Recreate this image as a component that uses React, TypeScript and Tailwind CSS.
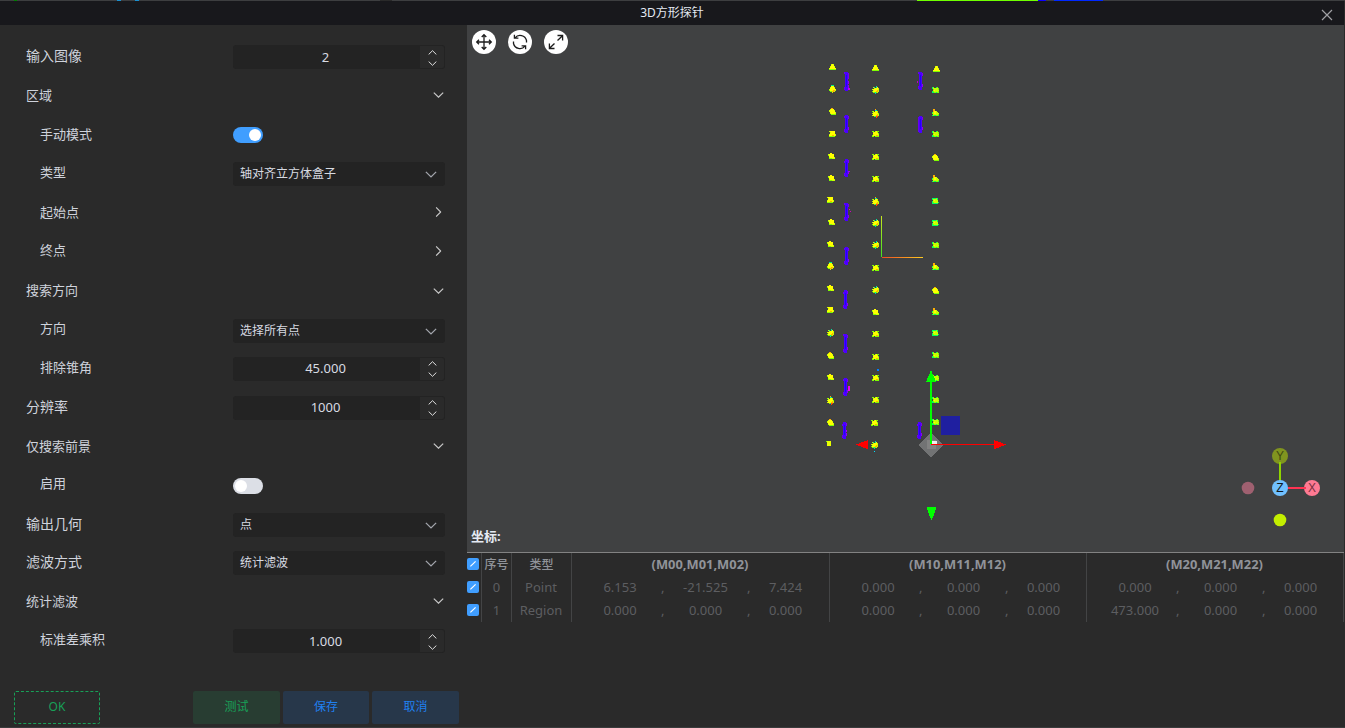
import React from "react";

type RowProps = { label: string; h?: string; size?: string; indent?: boolean; lift?: string; children?: React.ReactNode };

const base = "font-['Noto_Sans','Noto_Sans_CJK_SC',sans-serif]";

function Row({ label, h = "h-[39px]", size = "text-[13px]", indent = false, lift = "pb-0", children }: RowProps) {
  return (
    <div className={`flex shrink-0 items-start ${h}`}>
      <div className={`flex h-[38px] w-[233px] shrink-0 items-center leading-none text-[#cfd3dc] ${indent ? "pl-10" : "pl-[26px]"} ${size} ${lift}`}>
        {label}
      </div>
      <div className="flex h-[38px] w-[212px] items-center">{children}</div>
    </div>
  );
}

function Chevron({ className = "h-[6px] w-[11px] text-[#c8c8c8]" }: { className?: string }) {
  return (
    <svg viewBox="0 0 11 6" fill="none" stroke="currentColor" strokeWidth="1.2" className={className}>
      <path d="M0.8 0.6 5.5 5.2 10.2 0.6" />
    </svg>
  );
}

function Fold({ open = true }: { open?: boolean }) {
  return (
    <div className="flex w-full items-center justify-end pr-px pb-[2px]">
      {open ? <Chevron className="h-[6px] w-[11px] text-[#c8c8c8]" /> : <Chevron className="h-[6px] w-[11px] -rotate-90 text-[#c8c8c8]" />}
    </div>
  );
}

function NumberBox({ value, raised = false }: { value: string; raised?: boolean }) {
  return (
    <div className="flex h-6 w-[212px] items-center rounded-[3px] bg-[#232323] p-px">
      <div className={`w-[186px] pr-[3px] text-center text-[13px] leading-none text-[#d8dbe2] ${raised ? "pb-[2px]" : ""}`}>{value}</div>
      <div className={`flex h-[22px] w-6 flex-col items-center justify-center gap-[6px] rounded-r-[2px] bg-[#2a2a2a] ${raised ? "pb-px" : "pt-px"}`}>
        <Chevron className="h-[5px] w-[9px] rotate-180 text-[#e4e4e4]" />
        <Chevron className="h-[5px] w-[9px] text-[#e4e4e4]" />
      </div>
    </div>
  );
}

function SelectBox({ value }: { value: string }) {
  return (
    <div className="flex h-6 w-[212px] items-center justify-between rounded-[3px] bg-[#232323] pr-2 pl-[7px]">
      <span className="text-[12px] leading-none text-[#d8dbe2]">{value}</span>
      <Chevron className="h-[7px] w-[12px] text-[#a3a6ad]" />
    </div>
  );
}

function Toggle({ on = false }: { on?: boolean }) {
  return (
    <div className={`flex h-4 w-[30px] items-center rounded-full px-[2px] ${on ? "justify-end bg-[#409eff]" : "justify-start bg-[#dcdfe6]"}`}>
      <div className="size-3 rounded-full bg-white" />
    </div>
  );
}

const palette: Record<string, string> = {
  y: "#ffff00",
  l: "#c8ff00",
  g: "#80ff00",
  t: "#00ff60",
  c: "#00e6a0",
  o: "#ffb000",
  r: "#ff5000",
};

const sprites: Record<string, string[]> = {
  A: ["..lyl..", "..yyy..", ".lyyyl.", ".yyyyy.", "yyyyyyy", "ggggggg"],
  B: ["..ctc..", "..yyy..", ".lyyyl.", ".yyyyy.", "lyyyyyy", "gyyyool", ".ggool.", "...l..."],
  C: ["..oo...", ".lyyy..", "lyyyyl.", "lyyyyy.", ".yyyyyl", ".lyyyyl", "..ggggg"],
  D: ["lyyyyy.", ".lyyyy.", ".yyyyy.", "lyyyyyl", "yyyooyl", "gggggg."],
  E: ["..yy...", "lyyyyy.", "gyyyyy.", ".yyyyy.", ".lyyyyl", ".ggglll"],
  F: ["....c..", ".lc.cy.", "..lyyyl", "lyyyyyl", ".lyyyol", "gyyyool", ".ggcgl.", "...c..."],
  G: ["gg.lygg", ".lyyyl.", ".yyyyyg", ".lyyyyl", "gyyyool", "gg.gggg"],
  K: ["tg..tg.", "tlllllg", ".gllllg", ".lyllll", "tgllllg", "ttggtgg"],
  L: [".oo....", ".oo....", ".oyyl..", "tlyyll.", "glyylll", ".lllllg", "tgttggt"],
  M: ["ttttgt.", "tllllt.", ".lylll.", "tlllll.", "tgllllt", "tttttt."],
  N: ["...o...", "...cc..", "gl.yyl.", ".lyyyl.", "lyyyyyg", ".yyyyol", "lyyyool", "..gcrr.", "....r.."],
};

const points: [number, number, string][] = [
  [832, 67, "A"], [832, 89, "B"], [832, 111, "C"], [832, 134, "D"], [831, 156, "E"], [831, 178, "E"],
  [830, 200, "D"], [831, 222, "E"], [830, 244, "E"], [830, 266, "B"], [830, 288, "E"], [830, 310, "D"],
  [830, 333, "F"], [830, 355, "C"], [830, 377, "E"], [830, 400, "N"], [830, 422, "C"],
  [875, 68, "A"], [875, 90, "F"], [875, 113, "N"], [875, 134, "G"], [875, 157, "G"], [875, 179, "G"],
  [875, 201, "N"], [875, 223, "F"], [875, 245, "F"], [875, 268, "G"], [875, 290, "F"], [875, 312, "E"],
  [875, 334, "G"], [875, 357, "G"], [875, 378, "G"], [875, 400, "G"], [874, 423, "G"], [874, 445, "F"],
  [936, 69, "A"], [935, 90, "K"], [935, 112, "L"], [935, 134, "K"], [935, 157, "C"], [935, 178, "L"],
  [935, 201, "M"], [935, 223, "M"], [935, 245, "K"], [935, 266, "L"], [935, 290, "C"], [935, 311, "L"],
  [935, 333, "M"], [935, 355, "K"], [935, 378, "K"], [935, 400, "K"], [935, 422, "K"],
];

const bars: [number, number, number][] = [
  [845, 72, 19], [845, 115, 18], [845, 159, 18], [845, 203, 18], [845, 247, 18], [844, 290, 19],
  [844, 334, 19], [844, 378, 18], [843, 422, 17], [919, 72, 18], [919, 116, 17], [918, 422, 17],
];

function Scene() {
  return (
    <svg width="877" height="527" viewBox="467 25 877 527" className="block">
      <defs>
        <linearGradient id="axisX" x1="882" x2="923" y1="0" y2="0" gradientUnits="userSpaceOnUse">
          <stop offset="0" stopColor="#f04a20" />
          <stop offset="1" stopColor="#ffcc22" />
        </linearGradient>
        <linearGradient id="axisY" x1="0" x2="0" y1="257" y2="216" gradientUnits="userSpaceOnUse">
          <stop offset="0" stopColor="#40e020" />
          <stop offset="1" stopColor="#c8e620" />
        </linearGradient>
      </defs>
      <g shapeRendering="crispEdges">
        {bars.map(([x, y, h], i) => (
          <g key={i}>
            <rect x={x} y={y} width="3" height={h} fill="#4a00ff" />
            <rect x={x + 1} y={y + 3} width="1" height={h - 7} fill="#2000ff" />
            <rect x={x - 1} y={y + (i % 3)} width="1" height="2" fill="#6800f0" />
            <rect x={x - 1} y={y + h - 4} width="1" height="3" fill="#6800f0" />
            <rect x={x + 3} y={y + 1} width="1" height="3" fill="#7a00f0" />
            <rect x={x + 3} y={y + h - 6} width="1" height="3" fill="#9000f0" />
          </g>
        ))}
        <rect x="848" y="76" width="1" height="3" fill="#7a00f0" />
        <rect x="848" y="81" width="1" height="3" fill="#9000f0" />
        <rect x="848" y="386" width="2" height="5" fill="#f000f0" />
        <rect x="848" y="88" width="2" height="2" fill="#c000f0" />
        <rect x="849" y="209" width="1" height="1" fill="#f000c0" />
        <rect x="850" y="211" width="1" height="1" fill="#d000c0" />
        <rect x="848" y="171" width="2" height="1" fill="#a000f0" />
        <rect x="846" y="430" width="1" height="2" fill="#b000f0" />
        <rect x="917" y="81" width="1" height="2" fill="#c000c0" />
        <rect x="918" y="119" width="1" height="10" fill="#6800f0" />
        {points.map(([cx, cy, s], i) =>
          sprites[s].map((line, r) =>
            line.split("").map((k, c) =>
              k === "." ? null : (
                <rect key={`${i}-${r}-${c}`} x={cx - 3 + c} y={cy - Math.floor(sprites[s].length / 2) + r} width="1" height="1" fill={palette[k]} />
              ),
            ),
          ),
        )}
        <rect x="827" y="441" width="4" height="5" fill="#e8ff00" />
        <rect x="826" y="441" width="1" height="1" fill="#80ff00" />
        <rect x="877" y="369" width="2" height="2" fill="#0080ff" />
        <rect x="874" y="451" width="1" height="1" fill="#00e0ff" />
        <rect x="881" y="216" width="1" height="41" fill="url(#axisY)" />
        <rect x="882" y="257" width="41" height="1" fill="url(#axisX)" />
        <rect x="941" y="416" width="19" height="19" fill="#1f1fa0" />
        <path d="M931 432.5 943.5 445 931 457 918.5 445Z" fill="#727374" />
        <rect x="927" y="440" width="9" height="9" fill="#828282" />
        <rect x="932" y="441" width="5" height="4" fill="#eeeeee" />
        <rect x="930" y="381" width="2" height="63" fill="#00ff00" />
        <path d="M931 370 936 382H926Z M927 507H936V509L932 519.5H931L927 509Z" fill="#00ff00" />
        <rect x="931" y="444" width="63" height="1" fill="#ff0000" />
        <path d="M994 440 1006 444.5 994 449.5Z M868 440V449.5L856 444.5Z" fill="#ff0000" />
      </g>
      <circle cx="1280" cy="456" r="8" fill="#80941f" />
      <path d="M1280 462V484" stroke="#8fd400" strokeWidth="2" />
      <circle cx="1312" cy="488" r="8" fill="#ff7a93" />
      <path d="M1286 488H1306" stroke="#ff3352" strokeWidth="2" />
      <circle cx="1280" cy="488" r="8" fill="#70c0ff" />
      <circle cx="1248" cy="488" r="6.3" fill="#9f6070" />
      <circle cx="1280" cy="520" r="6.3" fill="#c3ee00" />
      <g fontFamily="Liberation Sans, sans-serif" fontSize="12" textAnchor="middle">
        <text x="1280" y="460" fill="#3f4a10">Y</text>
        <text x="1280" y="492.3" fill="#101820">Z</text>
        <text x="1312" y="492.3" fill="#7a3040">X</text>
      </g>
    </svg>
  );
}

function RoundButton({ children }: { children: React.ReactNode }) {
  return (
    <div className="flex size-6 items-center justify-center rounded-full bg-white">
      <svg width="18" height="18" viewBox="0 0 18 18" fill="none" stroke="#1c1c1c" strokeWidth="1.3">
        {children}
      </svg>
    </div>
  );
}

function Check() {
  return (
    <div className="flex size-3 items-center justify-center rounded-[2px] bg-[#409eff]">
      <svg width="8" height="8" viewBox="0 0 8 8" fill="none" stroke="#fff" strokeWidth="1.2">
        <path d="M1.4 6.4 6.6 1.4" />
      </svg>
    </div>
  );
}

const cell = "border-r border-[#434445]";
const rows = [
  { id: "0", type: "Point", m: [["6.153", "-21.525", "7.424"], ["0.000", "0.000", "0.000"], ["0.000", "0.000", "0.000"]] },
  { id: "1", type: "Region", m: [["0.000", "0.000", "0.000"], ["0.000", "0.000", "0.000"], ["473.000", "0.000", "0.000"]] },
];
const tableGrid = "grid h-[23px] grid-cols-[15px_30px_60px_258px_257px_257px]";

function Table() {
  return (
    <div className="flex flex-col text-[13px] leading-[23px]">
      <div className={`${tableGrid} font-bold text-[#909399]`}>
        <div className={`flex items-center pb-px ${cell}`}><Check /></div>
        <div className={`flex justify-center text-[12px] font-medium ${cell}`}>序号</div>
        <div className={`text-center text-[12px] font-medium ${cell}`}>类型</div>
        {["(M00,M01,M02)", "(M10,M11,M12)", "(M20,M21,M22)"].map((t) => (
          <div key={t} className={`pr-px text-center text-[12.9px] ${cell}`}>{t}</div>
        ))}
      </div>
      {rows.map((r) => (
        <div key={r.id} className={`${tableGrid} text-[#5d5e61]`}>
          <div className={`flex items-center pb-px ${cell}`}><Check /></div>
          <div className={`text-center ${cell}`}>{r.id}</div>
          <div className={`pr-px text-center ${cell}`}>{r.type}</div>
          {r.m.map(([a, b, c], i) => (
            <div key={i} className={`grid grid-cols-[82px_3px_83px_3px_71px] pl-[7px] text-center ${cell}`}>
              <span>{a}</span>
              <span>,</span>
              <span>{b}</span>
              <span>,</span>
              <span>{c}</span>
            </div>
          ))}
        </div>
      ))}
    </div>
  );
}

export default function App() {
  return (
    <div className={`flex h-[728px] w-[1345px] flex-col overflow-hidden bg-[#2a2a2a] ${base}`}>
      <svg width="1345" height="1" className="block shrink-0" shapeRendering="crispEdges">
        <rect width="1345" height="1" fill="#3d3e40" />
        <rect x="14" width="3" height="1" fill="#008000" />
        <rect x="117" width="4" height="1" fill="#1a90d0" />
        <rect x="135" width="4" height="1" fill="#1a90d0" />
        <rect x="380" width="12" height="1" fill="#2a2a2a" />
        <rect x="917" width="121" height="1" fill="#70ff00" />
        <rect x="1038" width="8" height="1" fill="#1000ff" />
        <rect x="1054" width="49" height="1" fill="#0028ff" />
      </svg>
      <header className="grid h-6 w-[1344px] shrink-0 grid-cols-[1fr_auto_1fr] items-center bg-[#18181c]">
        <span />
        <span className="text-[12px] leading-none text-[#e5eaf3]">3D方形探针</span>
        <svg width="12" height="12" viewBox="0 0 12 12" fill="none" stroke="#a0a0a4" strokeWidth="1.2" className="mt-1 mr-[11px] justify-self-end">
          <path d="M1 1 11 11M11 1 1 11" />
        </svg>
      </header>
      <div className="flex h-[702px] shrink-0">
        <aside className="flex w-[467px] shrink-0 flex-col pt-[13px]">
          <div className="flex h-[653px] flex-col">
            <Row label="输入图像" size="text-[14px]" lift="pb-[2px]"><NumberBox value="2" /></Row>
            <Row label="区域" lift="pb-[2px]"><Fold /></Row>
            <Row label="手动模式" indent lift="pb-[2px]"><Toggle on /></Row>
            <Row label="类型" indent lift="pb-[4px]"><SelectBox value="轴对齐立方体盒子" /></Row>
            <Row label="起始点" indent lift="pb-[2px]"><Fold open={false} /></Row>
            <Row label="终点" indent h="h-[40px]" lift="pb-[3px]"><Fold open={false} /></Row>
            <Row label="搜索方向" lift="pb-[3px]"><Fold /></Row>
            <Row label="方向" indent h="h-[38px]" lift="pb-[5px]"><SelectBox value="选择所有点" /></Row>
            <Row label="排除锥角" indent lift="pb-[3px]"><NumberBox value="45.000" raised /></Row>
            <Row label="分辨率" size="text-[14px]" lift="pb-[2px]"><NumberBox value="1000" raised /></Row>
            <Row label="仅搜索前景" lift="pb-[2px]"><Fold /></Row>
            <Row label="启用" indent lift="pb-[5px]"><Toggle /></Row>
            <Row label="输出几何" size="text-[14px]" h="h-[38px]" lift="pb-[2px]"><SelectBox value="点" /></Row>
            <Row label="滤波方式" size="text-[14px]" lift="pb-[2px]"><SelectBox value="统计滤波" /></Row>
            <Row label="统计滤波" lift="pb-px"><Fold /></Row>
            <Row label="标准差乘积" indent lift="pb-[3px]"><NumberBox value="1.000" /></Row>
          </div>
          <div className="flex h-[33px] pl-[14px] text-[12px] leading-none">
            <button className="flex w-[86px] items-center justify-center rounded-[2px] border border-dashed border-[#18a058] pb-[2px] text-[#18a058]">OK</button>
            <button className="ml-[93px] flex w-[87px] items-center justify-center rounded-[2px] bg-[#283d32] pb-[2px] text-[#18a058]">测试</button>
            <button className="ml-[3px] flex w-[86px] items-center justify-center rounded-[2px] bg-[#27374a] pb-[2px] text-[#2080f0]">保存</button>
            <button className="ml-[3px] flex w-[87px] items-center justify-center rounded-[2px] bg-[#27374a] pb-[2px] text-[#2080f0]">取消</button>
          </div>
        </aside>
        <main className="flex w-[877px] flex-col">
          <div className="relative h-[527px] shrink-0 bg-[#404142]">
            <Scene />
            <div className="absolute top-[5px] left-[5px] flex gap-3">
              <RoundButton>
                <path d="M9 1.8V16.2M1.8 9H16.2M6.7 4 9 1.7 11.3 4M6.7 14 9 16.3 11.3 14M4 6.7 1.7 9 4 11.3M14 6.7 16.3 9 14 11.3" />
              </RoundButton>
              <RoundButton>
                <path d="M2.5 8.5V10.5A6.6 6.6 0 0 0 14 13.2M15.5 9.5V7.5A6.6 6.6 0 0 0 4 4.8M3.4 1.8V5.2H7.4M14.6 16.2V12.8H10.6" />
              </RoundButton>
              <RoundButton>
                <path d="M10.5 7.5 15.5 2.7M7.5 10.5 2.5 15.3M10.5 2.5H15.6V7.5M7.5 15.5H2.4V10.5" />
              </RoundButton>
            </div>
            <div className="absolute bottom-[9px] left-[4px] text-[13px] leading-none font-bold text-[#e5eaf3]">坐标:</div>
          </div>
          <div className="h-px shrink-0 bg-[#828282]" />
          <Table />
        </main>
      </div>
      <div className="h-px bg-[#3a3b3c]" />
    </div>
  );
}
